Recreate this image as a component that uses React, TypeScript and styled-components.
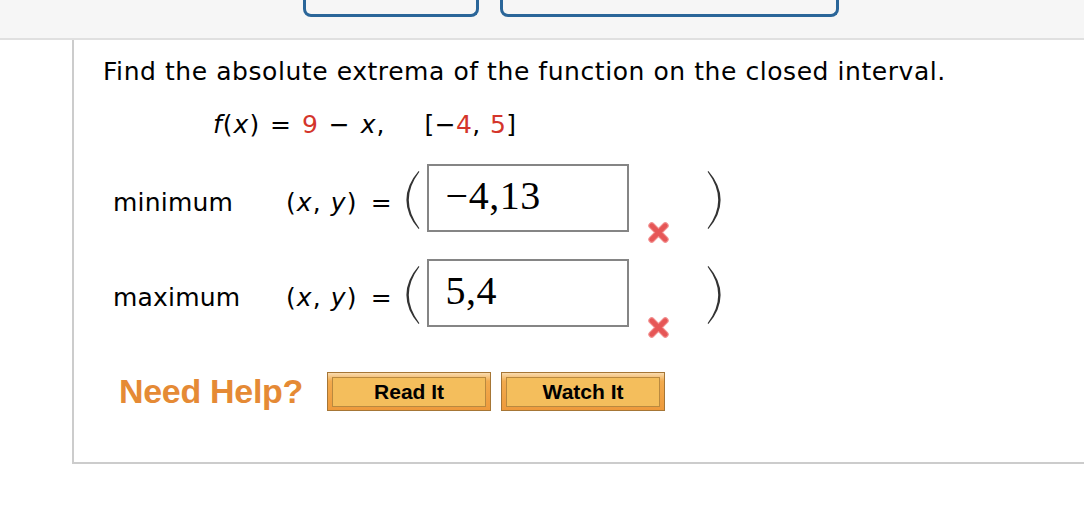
import React from "react";
import styled, { createGlobalStyle } from "styled-components";

const Global = createGlobalStyle`
  html, body { margin: 0; padding: 0; background: #ffffff; }
  body { font-family: "DejaVu Sans", Verdana, sans-serif; color: #000; }
  * { box-sizing: border-box; }
`;

const Header = styled.header`
  height: 40px;
  background: #f6f6f6;
  border-bottom: 2px solid #e0e0e0;
  display: flex;
  align-items: flex-start;
  gap: 21px;
  padding-left: 303px;
`;

const Tab = styled.div<{ $w: number }>`
  width: ${(p) => p.$w}px;
  height: 17px;
  border: 3px solid #2b6699;
  border-top: none;
  border-radius: 0 0 8px 8px;
  background: #f6f6f6;
`;

const Panel = styled.main`
  margin-left: 72px;
  height: 424px;
  border-left: 2px solid #cccccc;
  border-bottom: 2px solid #cccccc;
  padding: 17px 0 0 29px;
  display: flex;
  flex-direction: column;
`;

const Prompt = styled.p`
  margin: 0;
  font-size: 25px;
  line-height: 29px;
  letter-spacing: 0.56px;
`;

const Formula = styled.p`
  margin: 24px 0 0 110px;
  font-size: 25px;
  line-height: 29px;
  white-space: pre;
  letter-spacing: 1px;
  word-spacing: 1px;
`;

const Interval = styled.span`
  margin-left: 39px;
  letter-spacing: 0.4px;
`;

const Var = styled.i`
  font-style: italic;
`;

const Red = styled.span`
  color: #d4352b;
`;

const Rows = styled.div`
  margin: 25px 0 0 10px;
  display: flex;
  flex-direction: column;
  gap: 15px;
`;

const Row = styled.div`
  display: flex;
  align-items: flex-start;
`;

const Label = styled.span`
  width: 173px;
  margin-top: 24px;
  font-size: 25px;
  line-height: 30px;
  letter-spacing: 0.2px;
`;

const Coord = styled.span`
  margin-top: 24px;
  font-size: 25px;
  line-height: 30px;
  white-space: pre;
  letter-spacing: 1.1px;
`;

const Eq = styled.span`
  margin: 24px 14px 0 13px;
  font-size: 25px;
  line-height: 30px;
`;

const ParenSvg = styled.svg<{ $flip?: boolean }>`
  width: 14px;
  height: 58px;
  margin-top: 7px;
  flex: none;
  transform: ${(p) => (p.$flip ? "scaleX(-1)" : "none")};
`;

const AnswerBox = styled.div`
  width: 202px;
  height: 68px;
  margin-left: 7px;
  border: 2px solid #858585;
  padding: 10px 0 0 17px;
  font-family: "Liberation Serif", "Times New Roman", serif;
  font-size: 40px;
  line-height: 40px;
  letter-spacing: 0.5px;
  background: #fff;
`;

const Mark = styled.svg`
  width: 23px;
  height: 23px;
  margin: 57px 37px 0 18px;
  flex: none;
`;

const HelpRow = styled.div`
  margin: 33px 0 0 16px;
  display: flex;
  align-items: center;
`;

const HelpText = styled.span`
  font-family: "Liberation Sans", Arial, sans-serif;
  font-weight: bold;
  font-size: 34px;
  color: #e58a35;
  margin-right: 24px;
  letter-spacing: -0.3px;
`;

const HelpButton = styled.button`
  width: 164px;
  height: 39px;
  margin-right: 10px;
  padding: 4px 4px 3px 4px;
  border: 1px solid #a67636;
  background: linear-gradient(#f9dcb0 0%, #f2ab4e 22%, #ee9a3c 100%);
  display: flex;
  cursor: pointer;
`;

const ButtonFace = styled.span`
  flex: 1;
  border: 1px solid #b9893f;
  background: #f4be5c;
  font-family: "Liberation Sans", Arial, sans-serif;
  font-weight: bold;
  font-size: 21px;
  color: #000;
  display: flex;
  align-items: center;
  justify-content: center;
`;

const Paren = ({ flip }: { flip?: boolean }) => (
  <ParenSvg $flip={flip} viewBox="0 0 14 58">
    <path
      d="M12.6 0 Q0.4 14 0.4 29 Q0.4 44 12.6 58 L13.4 57.2 Q2.8 43 2.8 29 Q2.8 15 13.4 0.8 Z"
      fill="#333"
    />
  </ParenSvg>
);

const Cross = () => (
  <Mark viewBox="0 0 22 22">
    <path d="M4.5 4.5 L17.5 17.5 M17.5 4.5 L4.5 17.5" stroke="#f29090" strokeWidth="6.5" strokeLinecap="round" />
    <path d="M4.5 4.5 L17.5 17.5 M17.5 4.5 L4.5 17.5" stroke="#e65656" strokeWidth="4.5" strokeLinecap="round" />
  </Mark>
);

const AnswerRow = ({ label, value }: { label: string; value: string }) => (
  <Row>
    <Label>{label}</Label>
    <Coord>
      (<Var>x</Var>, <Var>y</Var>)
    </Coord>
    <Eq>=</Eq>
    <Paren />
    <AnswerBox>{value}</AnswerBox>
    <Cross />
    <Paren flip />
  </Row>
);

export default function App() {
  return (
    <>
      <Global />
      <Header>
        <Tab $w={176} />
        <Tab $w={339} />
      </Header>
      <Panel>
        <Prompt>Find the absolute extrema of the function on the closed interval.</Prompt>
        <Formula>
          <Var>f</Var>(<Var>x</Var>) = <Red>9</Red> − <Var>x</Var>,
          <Interval>
            [−<Red>4</Red>, <Red>5</Red>]
          </Interval>
        </Formula>
        <Rows>
          <AnswerRow label="minimum" value="−4,13" />
          <AnswerRow label="maximum" value="5,4" />
        </Rows>
        <HelpRow>
          <HelpText>Need Help?</HelpText>
          <HelpButton type="button">
            <ButtonFace>Read It</ButtonFace>
          </HelpButton>
          <HelpButton type="button">
            <ButtonFace>Watch It</ButtonFace>
          </HelpButton>
        </HelpRow>
      </Panel>
    </>
  );
}
